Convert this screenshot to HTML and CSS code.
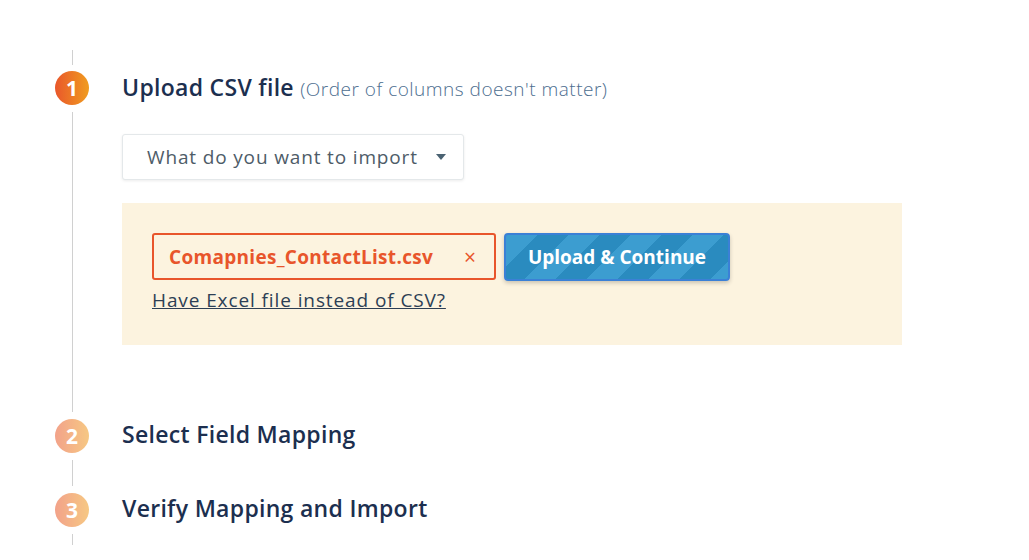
FILE: index.html
```html
<!DOCTYPE html>
<html>
<head>
<meta charset="utf-8">
<link rel="stylesheet" href="styles.css">
</head>
<body>
<div class="steps">
  <div class="step step-first">
    <div class="rail">
      <div class="seg seg-top"></div>
      <div class="num active">1</div>
      <div class="seg"></div>
    </div>
    <div class="content content-first">
      <h2 class="title">Upload CSV file <span class="sub">(Order of columns doesn't matter)</span></h2>
      <div class="select">
        <span>What do you want to import</span>
        <span class="caret"></span>
      </div>
      <div class="panel">
        <div class="row">
          <div class="file">
            <span class="fname">Comapnies_ContactList.csv</span>
            <span class="remove">×</span>
          </div>
          <button class="btn">Upload &amp; Continue</button>
        </div>
        <a class="excel" href="#">Have Excel file instead of CSV?</a>
      </div>
    </div>
  </div>
  <div class="step">
    <div class="rail">
      <div class="num">2</div>
      <div class="seg"></div>
    </div>
    <div class="content content-mid">
      <h2 class="title">Select Field Mapping</h2>
    </div>
  </div>
  <div class="step">
    <div class="rail">
      <div class="num">3</div>
      <div class="seg"></div>
    </div>
    <div class="content content-last">
      <h2 class="title">Verify Mapping and Import</h2>
    </div>
  </div>
</div>
</body>
</html>
```

FILE: styles.css
```css
html, body {
  margin: 0;
  padding: 0;
  background: #ffffff;
  font-family: "Open Sans", "Liberation Sans", sans-serif;
}

.steps {
  padding-top: 50px;
  padding-left: 55px;
}

.step {
  display: flex;
}

.rail {
  width: 34px;
  display: flex;
  flex-direction: column;
  align-items: center;
}

.seg {
  flex: 1;
  width: 1px;
  background: #d0d0d0;
  margin: 7px 0;
}

.seg-top {
  flex: 0 0 15px;
  margin: 0 0 6px 0;
}

.num {
  width: 34px;
  height: 34px;
  border-radius: 50%;
  background: linear-gradient(90deg, #e9572b, #f09c1f);
  color: #fff;
  font-weight: 700;
  font-size: 21px;
  line-height: 34px;
  text-align: center;
  opacity: 0.55;
  flex: 0 0 34px;
}

.num.active {
  opacity: 1;
}

.content {
  margin-left: 33px;
  display: flex;
  flex-direction: column;
  align-items: flex-start;
}

.content-first {
  margin-top: 21px;
  padding-bottom: 74px;
}

.content-mid {
  padding-bottom: 40px;
}

.content-last {
  padding-bottom: 25px;
}

.title {
  margin: 0;
  height: 34px;
  line-height: 30px;
  font-size: 23px;
  font-weight: 600;
  letter-spacing: 0.3px;
  color: #1c2f4f;
  white-space: nowrap;
}

.step-first .title {
  line-height: 32px;
}

.sub {
  font-size: 19px;
  font-weight: 300;
  letter-spacing: 0.5px;
  color: #4d6e8f;
}

.select {
  margin-top: 29px;
  width: 342px;
  height: 46px;
  box-sizing: border-box;
  border: 1px solid #e4e8ea;
  border-radius: 3px;
  box-shadow: 0 1px 3px rgba(0, 0, 0, 0.08);
  display: flex;
  align-items: center;
  justify-content: space-between;
  padding: 0 17px 0 24px;
  font-size: 19px;
  letter-spacing: 0.85px;
  color: #4e5c68;
  background: #fff;
}

.caret {
  width: 0;
  height: 0;
  border-left: 5.5px solid transparent;
  border-right: 5.5px solid transparent;
  border-top: 6px solid #4a6272;
}

.panel {
  margin-top: 23px;
  width: 780px;
  height: 142px;
  box-sizing: border-box;
  background: #fcf3df;
  padding: 30px 30px 0 30px;
}

.row {
  display: flex;
  gap: 8px;
}

.file {
  width: 344px;
  height: 47px;
  box-sizing: border-box;
  border: 2px solid #e8552b;
  border-radius: 3px;
  display: flex;
  align-items: center;
  justify-content: space-between;
  padding: 0 18px 0 15px;
  color: #e8552b;
}

.fname {
  font-size: 19px;
  font-weight: 700;
  letter-spacing: 0.3px;
}

.remove {
  font-size: 21px;
  font-weight: 400;
}

.btn {
  width: 226px;
  height: 48px;
  box-sizing: border-box;
  border: 2px solid #3b80d6;
  border-radius: 4px;
  background: repeating-linear-gradient(135deg, #3c9dd0 0 22px, #2a8bbf 22px 44px);
  color: #fff;
  font-family: inherit;
  font-size: 19px;
  font-weight: 700;
  box-shadow: 0 2px 4px rgba(0, 0, 0, 0.2);
}

.excel {
  margin-top: 6px;
  display: inline-block;
  font-size: 19px;
  letter-spacing: 0.9px;
  color: #2d3f55;
  text-decoration: underline;
}
```
